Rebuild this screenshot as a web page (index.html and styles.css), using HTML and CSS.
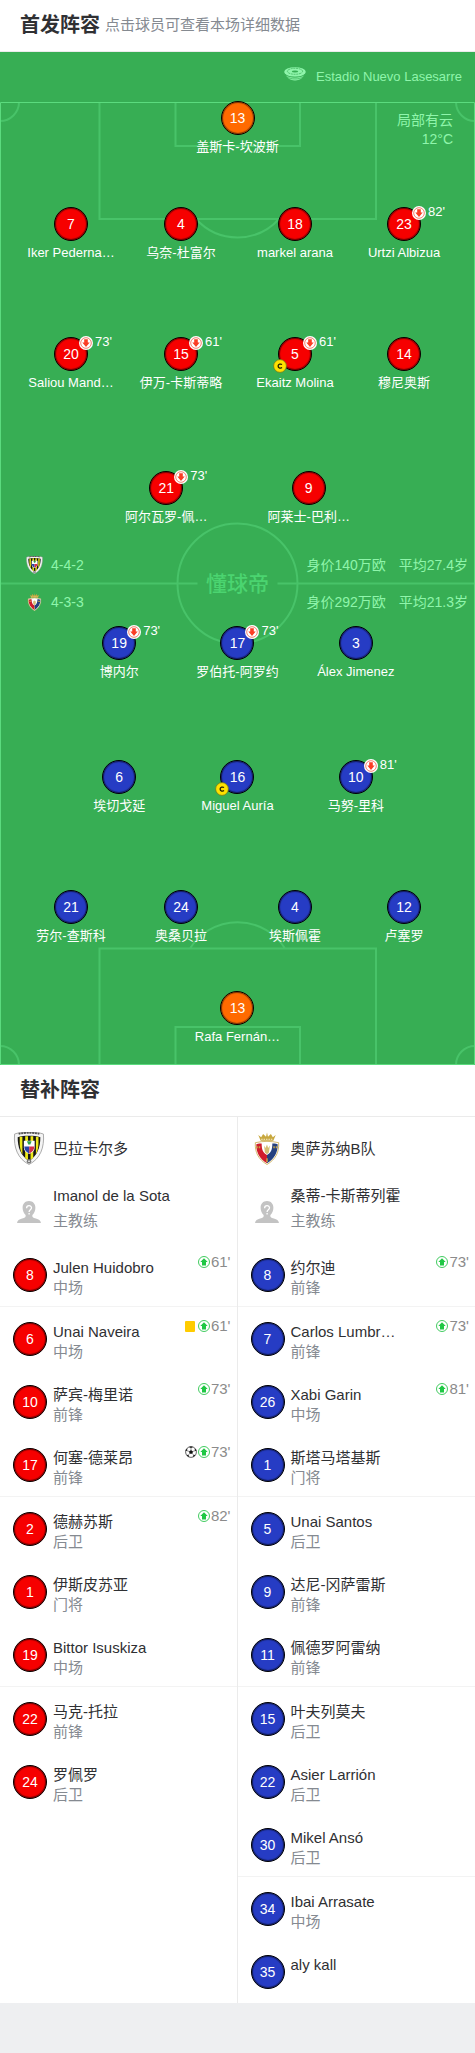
FILE: index.html
```html
<!DOCTYPE html>
<html lang="zh-CN">
<head>
<meta charset="utf-8">
<meta name="viewport" content="width=device-width, initial-scale=1">
<title>首发阵容</title>
<link rel="stylesheet" href="styles.css">
</head>
<body>
<svg class="sprite" aria-hidden="true">
  <symbol id="off" viewBox="0 0 14 14"><circle cx="7" cy="7" r="7" fill="#fff"/><circle cx="7" cy="7" r="5.300" fill="none" stroke="#f2604a" stroke-width=".8"/><path d="M5.200 3.200h3.600v3.400h1.900L7 11 3.300 6.600h1.900z" fill="#fb3d24"/></symbol>
  <symbol id="on" viewBox="0 0 12 12"><circle cx="6" cy="6" r="5.500" fill="#fff" stroke="#2cc54e" stroke-width=".9"/><path d="M6 2.200 9.700 6H8v3.600H4V6H2.300z" fill="#1fc744"/></symbol>
  <symbol id="cap" viewBox="0 0 14 14"><circle cx="7" cy="7" r="6.400" fill="#ffe100" stroke="#6d7a1c" stroke-width=".8"/><path d="M9 5.600C7.800 4.600 5.100 4.900 5.100 7.100s2.700 2.500 3.900 1.500" fill="none" stroke="#221f00" stroke-width="1.300"/></symbol>
  <symbol id="ball" viewBox="0 0 12 12"><circle cx="6" cy="6" r="5.400" fill="#fff" stroke="#222" stroke-width=".7"/><path d="M6 3.900 8 5.400 7.300 7.700H4.700L4 5.400zM3.900.9 6 2 8.100.9 6 .4zM.6 5l1.500-.3L2.300 2.400.9 3.700zM11.400 5l-1.500-.3-.2-2.300 1.400 1.300zM1.600 8.900l1.800-.2.900 2.300-1.700-.8zM10.400 8.900l-1.800-.2-.9 2.300 1.700-.8z" fill="#111"/><path d="M6 4V2M4 5.400 2 4.700M8 5.400l2-.7M4.700 7.700 3.400 8.800M7.300 7.700l1.300 1.100" stroke="#222" stroke-width=".5"/></symbol>
  <symbol id="coach" viewBox="0 0 24 22"><path d="M12 0c4 0 6.400 2.900 6.400 6.700 0 3.200-1.400 5.600-3 7.300-.5 2 .5 2.700 3.500 3.600 3 1 4.600 1.700 5.100 4.400H0c.5-2.700 2.100-3.400 5.100-4.400 3-.9 4-1.600 3.500-3.600-1.600-1.700-3-4.100-3-7.300C5.600 2.900 8 0 12 0z" fill="#c3c3c3"/><path d="M9.600 7.200c0-3.300 4.900-3.300 4.900-.4 0 1.900-2.400 1.900-2.400 4.100M12.100 12v1.600" fill="none" stroke="#fff" stroke-width="1.300"/></symbol>
  <symbol id="bar" viewBox="0 0 30 32"><path d="M1 2C6-.3 24-.3 29 2c1 13-3 24-14 29.500C4 26 0 15 1 2z" fill="#f4f4f4" stroke="#9a9a9a" stroke-width=".8"/><path d="M5 1.700C10 .5 20 .5 25 1.700" fill="none" stroke="#555" stroke-width="1.800" stroke-dasharray="2 .6"/><path d="M4 5c6-1.700 16-1.700 22 0 0 10-3 18-11 23C7 23 4 15 4 5z" fill="#151515"/><path d="M6 4.500h2.600v17.300C6.900 19 6 15 6 11zM11.300 4H14v23.300l-2.700-2zM16.500 4h2.600v21l-2.600 2.200zM21.700 4.500h2.500V11c0 4-.9 8-2.500 10.500z" fill="#ece817"/><path d="M10 8.500h10.500v6.500c0 3-2 5-5.200 6.300C12 20 10 18 10 15z" fill="#fff"/><path d="M10.400 14h4.800v6.800c-3-1.300-4.800-3.500-4.800-6.800z" fill="#2a45a8"/><path d="M15.200 14h5c0 3.300-2 5.500-5 6.800z" fill="#d63046"/><path d="M13 9h4.500l-1.200 3h-2z" fill="#2fa447"/><circle cx="15" cy="28.300" r="2.200" fill="#777"/><path d="M14 28.300h2" stroke="#fff"/></symbol>
  <symbol id="osa" viewBox="0 0 26 34"><path d="M4 3l3 2.500L9 2l3 3 1-4.500L14 5l3-3 2 3.500L22 3l-2.500 6h-13z" fill="#c8a83f"/><path d="M7 7.500h12" stroke="#f7efd4" stroke-dasharray="1.500 1"/><path d="M1 11c8-1.800 16-1.800 24 0 .6 10-3 17-12 22.500C4 28 .4 21 1 11z" fill="#fff" stroke="#c9a646" stroke-width=".8"/><path d="M2 12.500c2.500-.6 4-.7 5.500-.7 0 6 1 9 5.500 12v8.500C5 27 1.800 21 2 12.500z" fill="#d01c2b"/><path d="M24 12.500c-2.500-.6-4-.7-5.500-.7 0 6-1 9-5.500 12v8.500C21 27 24.200 21 24 12.500z" fill="#26417f"/><path d="M2 15.800h4.500M19.500 15.800H24" fill="none" stroke="#c9a646" stroke-width="2" stroke-dasharray="1.500 1"/><path d="M10 14l1.500 2.500L13 13l1.200 3.500L16 14l-1 7-2 2-2.200-2z" fill="#d4bd72"/><path d="M13 27v4" stroke="#c9a646" stroke-width="1.500"/></symbol>
</svg>

<header class="head head--first">
  <h1 class="head__title">首发阵容</h1>
  <p class="head__hint">点击球员可查看本场详细数据</p>
</header>

<main>
<section class="field">
  <svg class="field__lines" viewBox="0 0 475 1013" preserveAspectRatio="none" aria-hidden="true">
    <g fill="none" stroke="#48c369" stroke-width="2">
      <path d="M99.500 50v117h276.500V50M175.500 50v44h124.500V50M196 167a56 56 0 0 0 83 0"/>
      <path d="M19 50A19 19 0 0 1 0 69M456 50a19 19 0 0 0 19 19M0 994a19 19 0 0 1 19 19M475 994a19 19 0 0 0-19 19"/>
      <path d="M0 531.500h197.500M277.500 531.500H475"/><circle cx="237.500" cy="531.500" r="60"/>
      <path d="M99.500 1013V896.500h276.500V1013M175.500 1013v-38h124.500v38M190 896.500a56 56 0 0 1 95 0"/>
    </g>
    <path d="M.5 50.500h474v962H.5z" fill="none" stroke="#5bdb7e"/>
  </svg>
  <div class="field__body">
    <p class="venue">
      <svg class="venue__icon" viewBox="0 0 22 14" aria-hidden="true"><ellipse cx="11" cy="5" rx="10.800" ry="4.800" fill="#8ff5ab"/><ellipse cx="11" cy="4.300" rx="7.600" ry="3" fill="none" stroke="#37ae54" stroke-width=".7" stroke-dasharray="2 .7"/><ellipse cx="11" cy="4.500" rx="3.200" ry="1" fill="#37ae54"/><path d="M.4 6.500C3 11.500 19 11.500 21.600 6.500L18 11c-3 3.300-11 3.300-14 0z" fill="#8ff5ab"/><path d="M.6 6.800c3 4.600 17.800 4.600 20.800 0M3 10c4 2.600 12 2.600 16 0" fill="none" stroke="#37ae54" stroke-width=".7"/></svg>
      Estadio Nuevo Lasesarre
    </p>

    <div class="line line--keeper">
      <a class="man man--gk" href="#p"><span class="num">13</span><span class="man__name">盖斯卡-坎波斯</span></a>
      <p class="weather">局部有云<br>12°C</p>
    </div>
    <div class="line line--4 gap-s">
      <a class="man man--home" href="#p"><span class="num">7</span><span class="man__name">Iker Pederna…</span></a>
      <a class="man man--home" href="#p"><span class="num">4</span><span class="man__name">乌奈-杜富尔</span></a>
      <a class="man man--home" href="#p"><span class="num">18</span><span class="man__name">markel arana</span></a>
      <a class="man man--home" href="#p"><span class="num">23</span><span class="man__off"><svg><use href="#off"/></svg>82'</span><span class="man__name">Urtzi Albizua</span></a>
    </div>
    <div class="line line--4 gap-m">
      <a class="man man--home" href="#p"><span class="num">20</span><span class="man__off"><svg><use href="#off"/></svg>73'</span><span class="man__name">Saliou Mand…</span></a>
      <a class="man man--home" href="#p"><span class="num">15</span><span class="man__off"><svg><use href="#off"/></svg>61'</span><span class="man__name">伊万-卡斯蒂略</span></a>
      <a class="man man--home" href="#p"><span class="num">5</span><span class="man__off"><svg><use href="#off"/></svg>61'</span><svg class="man__cap"><use href="#cap"/></svg><span class="man__name">Ekaitz Molina</span></a>
      <a class="man man--home" href="#p"><span class="num">14</span><span class="man__name">穆尼奥斯</span></a>
    </div>
    <div class="line line--2 gap-l">
      <a class="man man--home" href="#p"><span class="num">21</span><span class="man__off"><svg><use href="#off"/></svg>73'</span><span class="man__name">阿尔瓦罗-佩…</span></a>
      <a class="man man--home" href="#p"><span class="num">9</span><span class="man__name">阿莱士-巴利…</span></a>
    </div>

    <div class="middle">
      <div class="middle__shape">
        <p class="shape"><svg><use href="#bar"/></svg>4-4-2</p>
        <p class="shape"><svg><use href="#osa"/></svg>4-3-3</p>
      </div>
      <p class="middle__logo">懂球帝</p>
      <div class="middle__stats">
        <p class="stat"><span>身价140万欧</span><span>平均27.4岁</span></p>
        <p class="stat"><span>身价292万欧</span><span>平均21.3岁</span></p>
      </div>
    </div>

    <div class="line line--3">
      <a class="man man--away" href="#p"><span class="num">19</span><span class="man__off"><svg><use href="#off"/></svg>73'</span><span class="man__name">博内尔</span></a>
      <a class="man man--away" href="#p"><span class="num">17</span><span class="man__off"><svg><use href="#off"/></svg>73'</span><span class="man__name">罗伯托-阿罗约</span></a>
      <a class="man man--away" href="#p"><span class="num">3</span><span class="man__name">Álex Jimenez</span></a>
    </div>
    <div class="line line--3 gap-l">
      <a class="man man--away" href="#p"><span class="num">6</span><span class="man__name">埃切戈延</span></a>
      <a class="man man--away" href="#p"><span class="num">16</span><svg class="man__cap"><use href="#cap"/></svg><span class="man__name">Miguel Auría</span></a>
      <a class="man man--away" href="#p"><span class="num">10</span><span class="man__off"><svg><use href="#off"/></svg>81'</span><span class="man__name">马努-里科</span></a>
    </div>
    <div class="line line--4 gap-m">
      <a class="man man--away" href="#p"><span class="num">21</span><span class="man__name">劳尔-查斯科</span></a>
      <a class="man man--away" href="#p"><span class="num">24</span><span class="man__name">奥桑贝拉</span></a>
      <a class="man man--away" href="#p"><span class="num">4</span><span class="man__name">埃斯佩霍</span></a>
      <a class="man man--away" href="#p"><span class="num">12</span><span class="man__name">卢塞罗</span></a>
    </div>
    <div class="line line--keeper gap-xs">
      <a class="man man--gk" href="#p"><span class="num">13</span><span class="man__name">Rafa Fernán…</span></a>
    </div>
  </div>
</section>

<section>
  <div class="head"><h2 class="head__title">替补阵容</h2></div>
  <div class="bench">
    <div class="team team--home">
      <h3 class="team__head"><svg><use href="#bar"/></svg>巴拉卡尔多</h3>
      <div class="coach"><svg><use href="#coach"/></svg><p>Imanol de la Sota<span class="role">主教练</span></p></div>
      <ul class="subs">
        <li><a class="sub" href="#p"><span class="num">8</span><span class="sub__name">Julen Huidobro<span class="role">中场</span></span><span class="events"><svg><use href="#on"/></svg>61'</span></a></li>
        <li><a class="sub" href="#p"><span class="num">6</span><span class="sub__name">Unai Naveira<span class="role">中场</span></span><span class="events"><i class="card"></i><svg><use href="#on"/></svg>61'</span></a></li>
        <li><a class="sub" href="#p"><span class="num">10</span><span class="sub__name">萨宾-梅里诺<span class="role">前锋</span></span><span class="events"><svg><use href="#on"/></svg>73'</span></a></li>
        <li><a class="sub" href="#p"><span class="num">17</span><span class="sub__name">何塞-德莱昂<span class="role">前锋</span></span><span class="events"><svg><use href="#ball"/></svg><svg><use href="#on"/></svg>73'</span></a></li>
        <li><a class="sub" href="#p"><span class="num">2</span><span class="sub__name">德赫苏斯<span class="role">后卫</span></span><span class="events"><svg><use href="#on"/></svg>82'</span></a></li>
        <li><a class="sub" href="#p"><span class="num">1</span><span class="sub__name">伊斯皮苏亚<span class="role">门将</span></span></a></li>
        <li><a class="sub" href="#p"><span class="num">19</span><span class="sub__name">Bittor Isuskiza<span class="role">中场</span></span></a></li>
        <li><a class="sub" href="#p"><span class="num">22</span><span class="sub__name">马克-托拉<span class="role">前锋</span></span></a></li>
        <li><a class="sub" href="#p"><span class="num">24</span><span class="sub__name">罗佩罗<span class="role">后卫</span></span></a></li>
      </ul>
    </div>
    <div class="team team--away">
      <h3 class="team__head"><svg><use href="#osa"/></svg>奥萨苏纳B队</h3>
      <div class="coach"><svg><use href="#coach"/></svg><p>桑蒂-卡斯蒂列霍<span class="role">主教练</span></p></div>
      <ul class="subs">
        <li><a class="sub" href="#p"><span class="num">8</span><span class="sub__name">约尔迪<span class="role">前锋</span></span><span class="events"><svg><use href="#on"/></svg>73'</span></a></li>
        <li><a class="sub" href="#p"><span class="num">7</span><span class="sub__name">Carlos Lumbr…<span class="role">前锋</span></span><span class="events"><svg><use href="#on"/></svg>73'</span></a></li>
        <li><a class="sub" href="#p"><span class="num">26</span><span class="sub__name">Xabi Garin<span class="role">中场</span></span><span class="events"><svg><use href="#on"/></svg>81'</span></a></li>
        <li><a class="sub" href="#p"><span class="num">1</span><span class="sub__name">斯塔马塔基斯<span class="role">门将</span></span></a></li>
        <li><a class="sub" href="#p"><span class="num">5</span><span class="sub__name">Unai Santos<span class="role">后卫</span></span></a></li>
        <li><a class="sub" href="#p"><span class="num">9</span><span class="sub__name">达尼-冈萨雷斯<span class="role">前锋</span></span></a></li>
        <li><a class="sub" href="#p"><span class="num">11</span><span class="sub__name">佩德罗阿雷纳<span class="role">前锋</span></span></a></li>
        <li><a class="sub" href="#p"><span class="num">15</span><span class="sub__name">叶夫列莫夫<span class="role">后卫</span></span></a></li>
        <li><a class="sub" href="#p"><span class="num">22</span><span class="sub__name">Asier Larrión<span class="role">后卫</span></span></a></li>
        <li><a class="sub" href="#p"><span class="num">30</span><span class="sub__name">Mikel Ansó<span class="role">后卫</span></span></a></li>
        <li><a class="sub" href="#p"><span class="num">34</span><span class="sub__name">Ibai Arrasate<span class="role">中场</span></span></a></li>
        <li><a class="sub" href="#p"><span class="num">35</span><span class="sub__name">aly kall</span></a></li>
      </ul>
    </div>
  </div>
</section>
</main>
</body>
</html>
```
FILE: styles.css
```css
* { box-sizing: border-box; margin: 0; padding: 0; }

body {
  background: #eeeff1;
  color: #2f3033;
  font: 15px/20px "Liberation Sans", "Noto Sans CJK SC", sans-serif;
}

a { color: inherit; text-decoration: none; }
ul { list-style: none; }
svg { display: block; flex: none; }
.sprite { position: absolute; width: 0; height: 0; }

.head {
  display: flex;
  align-items: center;
  gap: 5px;
  height: 52px;
  padding: 0 20px 2px;
  background: #fff;
  border-bottom: 1px solid #ebebeb;
}
.head__title { font-size: 20px; line-height: 30px; font-weight: 700; }
.head__hint { color: #858a91; }

/* Pitch: markings and players share one grid cell */
.field { display: grid; background: #37ae54; color: #fff; }
.field__lines, .field__body { grid-area: 1 / 1; min-width: 0; }
.field__lines { width: 100%; height: 100%; contain: size; }
.field__body { padding-bottom: 19px; z-index: 1; }

.venue {
  display: flex;
  align-items: center;
  justify-content: flex-end;
  gap: 10px;
  height: 49px;
  padding-right: 13px;
  color: #8ff5ab;
  font-size: 13px;
}
.venue__icon { width: 22px; height: 14px; margin-bottom: 6px; }

.line { display: grid; }
.line--keeper { grid-template-columns: 1fr auto 1fr; height: 55px; }
.line--keeper .man { grid-column: 2; }
.line--4 { grid-template-columns: 53fr 57fr 57fr 52fr; padding: 0 19px 0 18px; }
.line--3 { grid-template-columns: repeat(3, 1fr); padding: 0 60px; }
.line--2 { grid-template-columns: repeat(2, 1fr); padding: 0 95px; }
.gap-xs { margin-top: 46px; }
.gap-s { margin-top: 51px; }
.gap-m { margin-top: 75px; }
.gap-l { margin-top: 79px; }

.weather {
  justify-self: end;
  padding: 10px 22px 0 0;
  color: #8ff5ab;
  font-size: 14px;
  line-height: 19px;
  text-align: right;
}

.num {
  display: block;
  flex: none;
  width: 34px;
  height: 34px;
  border: 1px solid #000;
  border-radius: 50%;
  box-shadow: inset 0 0 1px 1px rgba(0, 0, 0, .5);
  color: #fff;
  font-size: 14px;
  line-height: 32px;
  text-align: center;
}
.man--home .num, .team--home .num { background: #f60000; }
.man--away .num, .team--away .num { background: #263cc4; }
.man--gk .num { background: #ff6a00; }

.man {
  position: relative;
  justify-self: center;
  display: flex;
  flex-direction: column;
  align-items: center;
  gap: 3px;
  font-size: 13px;
  line-height: 18px;
  white-space: nowrap;
}
.man__off {
  position: absolute;
  left: 50%;
  top: -4px;
  display: flex;
  align-items: center;
  gap: 2px;
  margin-left: 8px;
}
.man__off svg { width: 14px; height: 14px; margin-top: 1px; }
.man__cap {
  position: absolute;
  left: 50%;
  top: 22px;
  width: 14px;
  height: 14px;
  margin-left: -22px;
}

.middle {
  display: grid;
  grid-template-columns: minmax(0, 1fr) auto minmax(0, 1fr);
  align-items: center;
  padding: 27px 7px 12px;
  color: #8ff5ab;
  font-size: 14px;
  line-height: 24px;
  white-space: nowrap;
}
.middle__shape, .middle__stats { display: grid; gap: 13px; }
.middle__shape { padding-left: 19px; }
.middle__stats { justify-content: end; }
.middle__logo { color: #4bd470; font-size: 21px; font-weight: 500; }
.shape { display: flex; align-items: center; gap: 8px; }
.shape svg { width: 17px; height: 18px; }
.stat { display: flex; gap: 13px; }

/* Bench */
.bench { display: grid; grid-template-columns: 1fr 1fr; background: #fff; }
.team--home { border-right: 1px solid #ebebeb; }
.team__head {
  display: flex;
  align-items: center;
  gap: 8px;
  height: 63px;
  padding-left: 13px;
  font-size: 15px;
  font-weight: 400;
}
.team__head svg { width: 32px; height: 33px; }
.coach { display: flex; gap: 12px; height: 63px; padding: 3px 0 0 17px; line-height: 25px; }
.coach svg { width: 24px; height: 22px; margin-top: 18px; }
.role { display: block; color: #858a91; }

.subs li { height: 63px; }
.subs li:nth-child(3n + 1) { height: 64px; border-bottom: 1px solid #f3f3f3; }
.subs li:last-child { border-bottom: 0; }
.sub { display: flex; height: 100%; padding: 15px 6px 0 13px; }
.sub__name { flex: 1; min-width: 0; padding-left: 6px; white-space: nowrap; }
.events { display: flex; align-items: center; gap: 1px; height: 20px; margin-top: -6px; color: #8b8b8b; }
.events svg { width: 12px; height: 12px; }
.card { width: 10px; height: 11px; margin-right: 2px; border-radius: 1px; background: #ffcc00; }
```
